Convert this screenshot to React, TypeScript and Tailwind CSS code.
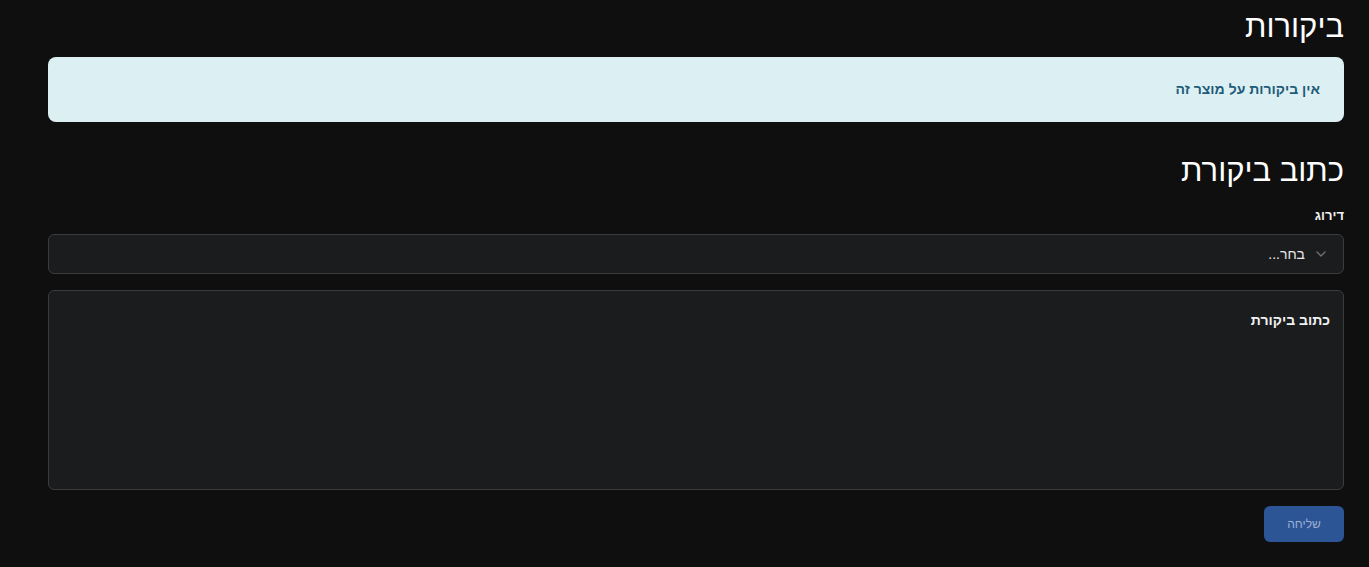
import { FiChevronDown } from "react-icons/fi";

export default function App() {
  return (
    <main
      dir="rtl"
      className="min-h-screen bg-[#0f0f10] text-white"
      style={{ fontFamily: '"Liberation Sans", Arial, sans-serif' }}
    >
      <div className="ml-12 mr-[25px] pt-[8px]">
        <h2 className="text-[31px] leading-[38px] font-normal">ביקורות</h2>

        <div className="mt-[11px] flex h-[65px] items-center rounded-lg bg-[#dcf0f4] px-6">
          <span className="text-[14px] font-semibold text-[#1f5b78]">אין ביקורות על מוצר זה</span>
        </div>

        <h2 className="mt-[30px] text-[31px] leading-[38px] font-normal">כתוב ביקורת</h2>

        <label className="mt-[16px] block text-[13px] font-bold leading-5 text-[#f1f1f1]">דירוג</label>

        <div className="mt-[8px] flex h-[40px] items-center gap-2 rounded-md border border-[#3b3c3e] bg-[#1b1c1e] px-[14px] text-[14px] text-[#e8e8e8]">
          <FiChevronDown className="size-[16px] text-[#6f7174]" />
          <span>בחר...</span>
        </div>

        <div className="mt-[16px] h-[200px] rounded-md border border-[#3b3c3e] bg-[#1b1c1e] px-[13px] pt-[17px]">
          <span className="text-[14px] font-bold text-[#f1f1f1]">כתוב ביקורת</span>
        </div>

        <div className="mt-[16px] flex">
          <button className="h-[36px] w-[80px] rounded-md bg-[#2c5596] text-[12px] text-[#9fb0d2]">שליחה</button>
        </div>
      </div>
    </main>
  );
}
